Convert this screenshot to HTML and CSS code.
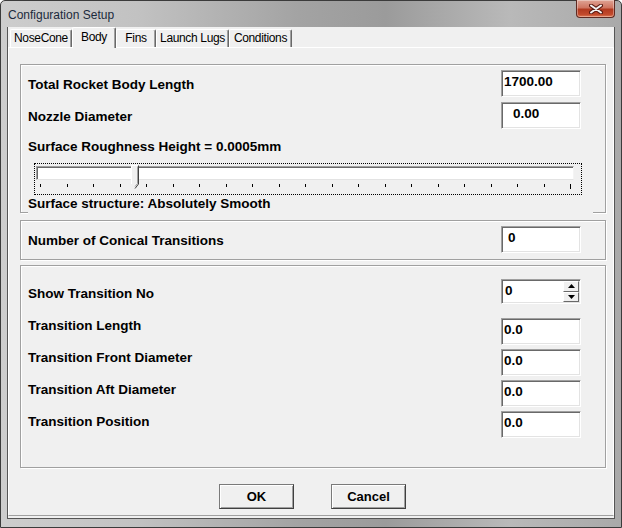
FILE: index.html
```html
<!DOCTYPE html>
<html lang="en">
	<head>
		<meta charset="UTF-8" />
		<title>Configuration Setup</title>
		<link rel="stylesheet" href="styles.css">
	</head>
	<body>
		<div class="window">
			<!-- title bar -->
			<div class="titlebar">
				<span class="title">Configuration Setup</span>
				<div class="close">
					<svg width="14" height="10" viewBox="0 0 14 10">
						<path d="M2 1.5 L12 8.5 M12 1.5 L2 8.5" stroke="#5b1b12" stroke-width="4" stroke-linecap="round" />
						<path d="M2 1.5 L12 8.5 M12 1.5 L2 8.5" stroke="#f4f4f4" stroke-width="2" stroke-linecap="round" />
					</svg>
				</div>
			</div>

			<div class="client">
				<!-- tabs -->
				<div class="tabs">
					<div class="tab tab-nose">NoseCone</div>
					<div class="tab tab-body active">Body</div>
					<div class="tab tab-fins">Fins</div>
					<div class="tab tab-lugs">Launch Lugs</div>
					<div class="tab tab-cond">Conditions</div>
				</div>

				<div class="pane">
					<!-- body dimensions -->
					<div class="group group-body">
						<div class="fields">
							<div class="labels labels-body">
								<label>Total Rocket Body Length</label>
								<label>Nozzle Diameter</label>
							</div>
							<div class="inputs inputs-body">
								<input class="field" type="text" value="1700.00" readonly>
								<input class="field field-indent" type="text" value="0.00" readonly>
							</div>
						</div>
						<div class="roughness">Surface Roughness Height = 0.0005mm</div>
						<div class="slider">
							<div class="track">
								<svg class="thumb" style="left: 94px" width="8" height="24" viewBox="0 0 8 24">
									<polygon points="0.5,0.5 7.5,0.5 7.5,19 4,23.5 0.5,19" fill="#f0f0f0" />
									<polyline points="0.5,19 0.5,0.5 7,0.5" fill="none" stroke="#ffffff" stroke-width="1" />
									<polyline points="7.5,0.5 7.5,19 4,23.5" fill="none" stroke="#404040" stroke-width="1" />
									<polyline points="6.5,1.5 6.5,18.5 4,21.5" fill="none" stroke="#a0a0a0" stroke-width="1" />
								</svg>
							</div>
							<div class="ticks">
								<span class="tick"></span><span class="tick"></span><span class="tick"></span>
								<span class="tick"></span><span class="tick"></span><span class="tick"></span>
								<span class="tick"></span><span class="tick"></span><span class="tick"></span>
								<span class="tick"></span><span class="tick"></span><span class="tick"></span>
								<span class="tick"></span><span class="tick"></span><span class="tick"></span>
								<span class="tick"></span><span class="tick"></span><span class="tick"></span>
								<span class="tick"></span><span class="tick"></span><span class="tick"></span>
							</div>
						</div>
						<div class="structure">Surface structure: Absolutely Smooth</div>
					</div>

					<!-- transitions count -->
					<div class="group group-count">
						<div class="fields">
							<div class="labels labels-count">
								<label>Number of Conical Transitions</label>
							</div>
							<div class="inputs inputs-count">
								<input class="field field-small-indent" type="text" value="0" readonly>
							</div>
						</div>
					</div>

					<!-- transition details -->
					<div class="group group-trans">
						<div class="fields">
							<div class="labels labels-trans">
								<label>Show Transition No</label>
								<label>Transition Length</label>
								<label>Transition Front Diameter</label>
								<label>Transition Aft Diameter</label>
								<label>Transition Position</label>
							</div>
							<div class="inputs inputs-trans">
								<div class="spin">
									<input type="text" value="0" readonly>
									<div class="spin-buttons">
										<div class="spin-btn">
											<svg width="7" height="4" viewBox="0 0 7 4"><polygon points="3.5,0 7,4 0,4" fill="#000" /></svg>
										</div>
										<div class="spin-btn">
											<svg width="7" height="4" viewBox="0 0 7 4"><polygon points="0,0 7,0 3.5,4" fill="#000" /></svg>
										</div>
									</div>
								</div>
								<input class="field field-first" type="text" value="0.0" readonly>
								<input class="field" type="text" value="0.0" readonly>
								<input class="field" type="text" value="0.0" readonly>
								<input class="field" type="text" value="0.0" readonly>
							</div>
						</div>
					</div>

					<!-- dialog buttons -->
					<div class="buttons">
						<button class="btn">OK</button>
						<button class="btn">Cancel</button>
					</div>
				</div>
			</div>
		</div>
	</body>
</html>
```

FILE: styles.css
```css
/* base */
html,
body {
	margin: 0;
	padding: 0;
	background-color: #ffffff;
}

/* window frame */
.window {
	width: 622px;
	height: 528px;
	box-sizing: border-box;
	display: flex;
	flex-direction: column;
	padding: 0 6px 8px 6px;
	border: 1px solid #3b3b3b;
	border-radius: 5px 5px 0 0;
	background: linear-gradient(to right, #cdcdcd 0%, #c2c2c2 22%, #a3a3a3 48%, #9b9b9b 62%, #b9b9b9 82%, #a9a9a9 100%);
	font-family: "Liberation Sans", Arial, sans-serif;
}

.titlebar {
	height: 26px;
	display: flex;
	justify-content: space-between;
	align-items: flex-start;
}

.title {
	padding: 7px 0 0 1px;
	font-size: 12px;
	line-height: 15px;
	color: #1b2a3c;
}

.close {
	width: 39px;
	height: 18px;
	margin-top: -1px;
	box-sizing: border-box;
	display: flex;
	align-items: center;
	justify-content: center;
	border: 1px solid #5e2a22;
	border-top: none;
	border-radius: 0 0 4px 4px;
	background: linear-gradient(to bottom, #dfa394 0%, #cf7561 45%, #b23a20 55%, #c24a2c 85%, #e07b55 100%);
	box-shadow: inset 0 0 0 1px rgba(255, 255, 255, 0.35);
}

.client {
	flex: 1;
	display: flex;
	flex-direction: column;
	border: 1px solid #555555;
	border-top: none;
	background-color: #f0f0f0;
}

/* tabs */
.tabs {
	height: 20px;
	display: flex;
	align-items: flex-end;
	padding-left: 2px;
}

.tab {
	height: 18px;
	box-sizing: border-box;
	border: 1px solid;
	border-color: #ffffff #696969 transparent #ffffff;
	border-bottom: none;
	border-radius: 2px 2px 0 0;
	box-shadow: inset -1px 0 #a0a0a0;
	background-color: #f0f0f0;
	font-size: 12px;
	letter-spacing: -0.35px;
	line-height: 17px;
	text-align: center;
	color: #000000;
}

.tab.active {
	height: 21px;
	margin-bottom: -1px;
	position: relative;
	z-index: 1;
	line-height: 16px;
	padding-top: 1px;
}

.tab-nose { width: 62px; }
.tab-body { width: 44px; }
.tab-fins { width: 40px; }
.tab-lugs { width: 73px; }
.tab-cond { width: 63px; }

.pane {
	flex: 1;
	display: flex;
	flex-direction: column;
	margin-bottom: 2px;
	border: 1px solid;
	border-color: #ffffff #ffffff #a0a0a0 #ffffff;
}

/* group boxes */
.group {
	margin: 0 7px 0 11px;
	padding: 0 24px 0 7px;
	border: 1px solid #a0a0a0;
	box-shadow: inset 1px 1px #ffffff, 1px 1px #ffffff;
}

.group-body {
	margin-top: 16px;
}

.group-count {
	margin-top: 7px;
	padding-bottom: 6px;
}

.group-trans {
	margin-top: 5px;
	padding-bottom: 29px;
}

.fields {
	display: flex;
	justify-content: space-between;
}

.labels {
	display: flex;
	flex-direction: column;
	gap: 16px;
}

.labels label,
.roughness,
.structure {
	font-size: 13.5px;
	font-weight: bold;
	line-height: 16px;
	color: #000000;
}

.labels-body { padding-top: 12px; }
.labels-count { padding-top: 12px; }
.labels-trans { padding-top: 20px; }

.inputs {
	display: flex;
	flex-direction: column;
	gap: 5px;
}

.inputs-body { padding-top: 5px; }
.inputs-count { padding-top: 5px; }

.inputs-trans {
	padding-top: 13px;
	gap: 4px;
}

/* sunken edit boxes */
.field,
.spin {
	width: 80px;
	box-sizing: border-box;
	border: 1px solid;
	border-color: #a0a0a0 #ffffff #ffffff #a0a0a0;
	box-shadow: inset 1px 1px #696969, inset -1px -1px #e3e3e3;
	background-color: #ffffff;
}

.field {
	height: 27px;
	margin: 0;
	padding: 0 0 4px 2px;
	font-family: "Liberation Sans", Arial, sans-serif;
	font-size: 13.5px;
	font-weight: bold;
	color: #000000;
	outline: none;
}

.field-indent { padding-left: 11px; }
.field-small-indent { padding-left: 6px; }
.field-first { margin-top: 10px; }

.spin {
	height: 25px;
	display: flex;
	padding: 1px 1px 1px 1px;
}

.spin input {
	flex: 1;
	min-width: 0;
	border: none;
	outline: none;
	margin: 0;
	padding: 0 0 2px 2px;
	background: transparent;
	font-family: "Liberation Sans", Arial, sans-serif;
	font-size: 13.5px;
	font-weight: bold;
	color: #000000;
}

.spin-buttons {
	width: 16px;
	display: flex;
	flex-direction: column;
}

.spin-btn {
	flex: 1;
	display: flex;
	align-items: center;
	justify-content: center;
	box-sizing: border-box;
	border: 1px solid;
	border-color: #ffffff #696969 #696969 #ffffff;
	background-color: #f0f0f0;
}

/* slider */
.roughness {
	margin-top: 10px;
}

.slider {
	width: 548px;
	height: 32px;
	box-sizing: border-box;
	margin: 8px 0 0 6px;
	border: 1px dotted #000000;
}

.track {
	position: relative;
	width: 538px;
	height: 14px;
	box-sizing: border-box;
	margin: 2px 0 0 1px;
	border: 1px solid;
	border-color: #a0a0a0 #f4f4f4 #e3e3e3 #a0a0a0;
	box-shadow: inset 1px 1px #696969;
	background-color: #ffffff;
}

.thumb {
	position: absolute;
	top: -2px;
}

.ticks {
	width: 531px;
	display: flex;
	justify-content: space-between;
	margin: 4px 0 0 5px;
}

.tick {
	width: 1px;
	height: 3px;
	background-color: #000000;
}

.tick:last-child {
	height: 5px;
}

.structure {
	position: relative;
	margin: 1px -12px -2px 0;
	padding-bottom: 2px;
	background-color: #f0f0f0;
}

/* dialog buttons */
.buttons {
	display: flex;
	justify-content: center;
	gap: 37px;
	margin-top: 16px;
	padding-left: 3px;
}

.btn {
	width: 75px;
	height: 25px;
	box-sizing: border-box;
	border: 1px solid;
	border-color: #7a7a7a #404040 #404040 #7a7a7a;
	box-shadow: inset 1px 1px #ffffff, inset -1px -1px #a0a0a0;
	background-color: #f0f0f0;
	font-family: "Liberation Sans", Arial, sans-serif;
	font-size: 13px;
	font-weight: bold;
	color: #000000;
	padding: 0;
}
```
